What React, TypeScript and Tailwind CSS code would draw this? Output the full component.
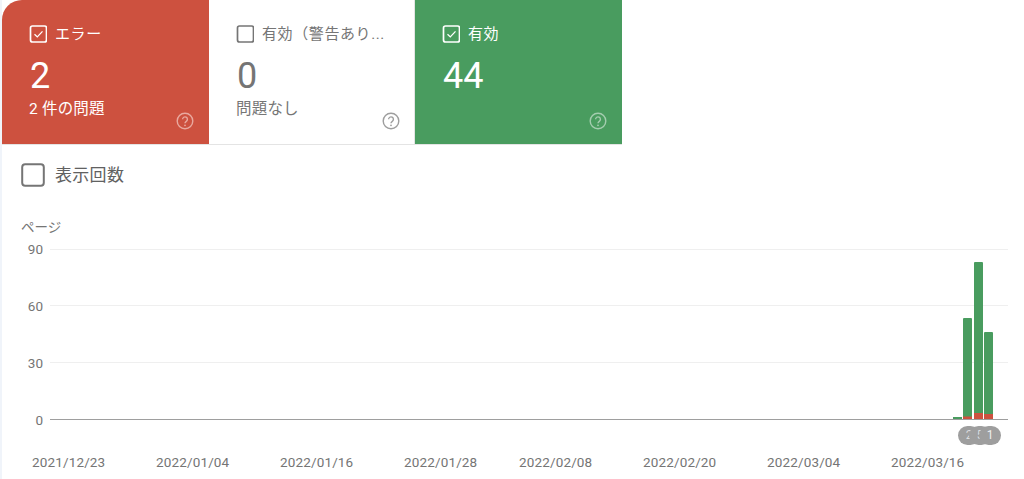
const FONT = "font-['Roboto','Noto_Sans_CJK_JP','Noto_Sans',sans-serif]";

function Check({ on, color }: { on: boolean; color: string }) {
  return (
    <svg width="18" height="18" viewBox="0 0 18 18" fill="none" className="shrink-0">
      <rect x="1.5" y="1" width="16" height="16" rx="2" stroke={color} strokeWidth="1.7" />
      {on && <path d="M5.5 9.2l2.8 2.7L13.5 6.4" stroke={color} strokeWidth="1.3" />}
    </svg>
  );
}

function Help({ color, right }: { color: string; right: string }) {
  return (
    <svg width="18" height="18" viewBox="0 0 18 18" fill="none" className={`absolute bottom-[14px] ${right}`}>
      <circle cx="9" cy="9" r="7.8" stroke={color} strokeWidth="1.4" />
      <path d="M6.6 7.3a2.4 2.4 0 1 1 3.7 2c-.9.6-1.3 1-1.3 1.9" stroke={color} strokeWidth="1.4" />
      <circle cx="9" cy="13.3" r="0.9" fill={color} />
    </svg>
  );
}

function Card({ title, value, sub, on, bg, fg, help, corner, right }: { title: string; value: string; sub?: string; on: boolean; bg: string; fg: string; help: string; corner?: string; right: string }) {
  return (
    <div className={`relative h-[144px] pl-[27px] pr-[26px] pt-[25px] ${bg} ${fg} ${corner ?? ""}`}>
      <div className="flex items-center gap-[8px] h-[18px]">
        <Check on={on} color={on ? "#ffffff" : "#757575"} />
        <span className="text-[15px] leading-[18px] tracking-[0.6px] whitespace-nowrap">{title}</span>
      </div>
      <div className="text-[36px] leading-[42px] mt-[12px] ml-[1px]">{value}</div>
      {sub && <div className="text-[15.5px] leading-[20px] mt-[2px] tracking-[0.2px]">{sub}</div>}
      <Help color={help} right={right} />
    </div>
  );
}

const dates = ["2021/12/23", "2022/01/04", "2022/01/16", "2022/01/28", "2022/02/08", "2022/02/20", "2022/03/04", "2022/03/16"];
const dateWidths = [124, 124, 124, 115, 124, 124, 124, 100];

function Chart() {
  return (
    <svg width="958" height="175" viewBox="0 0 958 175" className="block">
      <path d="M0 0.5H958M0 56.5H958M0 113.5H958" stroke="#efefef" />
      <path d="M0 170.5H958" stroke="#9e9e9e" />
      <rect x="903" y="168" width="9" height="2" fill="#499c5f" />
      <rect x="913" y="69" width="9" height="101" rx="1" fill="#499c5f" />
      <rect x="913" y="167.5" width="9" height="2.5" fill="#cd513f" />
      <rect x="924" y="13" width="9" height="157" rx="1" fill="#499c5f" />
      <rect x="924" y="164" width="9" height="6" fill="#cd513f" />
      <rect x="934" y="83" width="9" height="87" rx="1" fill="#499c5f" />
      <rect x="934" y="165" width="9" height="5" fill="#cd513f" />
    </svg>
  );
}

export default function App() {
  return (
    <div className={`${FONT} w-[1024px] h-[479px] overflow-hidden bg-white border-l-[2px] border-[#f0f4fa]`}>
      <div className="flex w-[620px] border-b border-[#e4e4e4]">
        <div className="w-[207px] shrink-0">
          <Card title="エラー" value="2" sub="2 件の問題" on bg="bg-[#cd513f]" fg="text-white" help="#e9a99f" corner="rounded-tl-[20px]" right="right-[15px]" />
        </div>
        <div className="w-[206px] shrink-0 border-r border-[#e4e4e4]">
          <Card title="有効（警告あり..." value="0" sub="問題なし" on={false} bg="bg-white" fg="text-[#757575]" help="#9e9e9e" right="right-[14px]" />
        </div>
        <div className="w-[207px] shrink-0">
          <Card title="有効" value="44" on bg="bg-[#499c5f]" fg="text-white" help="#a4cdaf" right="right-[15px]" />
        </div>
      </div>

      <div className="flex items-center gap-[10px] pl-[19px] pt-[17px] h-[43px]">
        <svg width="24" height="24" viewBox="0 0 24 24" fill="none" className="shrink-0">
          <rect x="1.2" y="1.2" width="21.6" height="21.6" rx="3" stroke="#757575" strokeWidth="2" />
        </svg>
        <span className="text-[17px] leading-[24px] text-[#616161] tracking-[0.3px]">表示回数</span>
      </div>

      <div className="pl-[19px] mt-[31px] text-[13.5px] leading-[16px] text-[#757575]">ページ</div>

      <div className="flex mt-[14px] text-[#757575] text-[13.5px]">
        <div className="w-[37px] ml-[4px] flex flex-col items-end leading-[14px] h-[180px] -mt-[7px] shrink-0 gap-[43px]">
          <span>90</span>
          <span>60</span>
          <span>30</span>
          <span>0</span>
        </div>
        <div className="ml-[7px] relative">
          <Chart />
          <div className="absolute left-[908px] top-[177px] flex">
            <span className="w-[22px] h-[19px] rounded-full bg-[#9e9e9e] text-[#dddddd] text-[12px] leading-[19px] text-center">2</span>
            <span className="w-[22px] h-[19px] rounded-full bg-[#9e9e9e] text-[#dddddd] text-[12px] leading-[19px] text-center -ml-[11px]">5</span>
            <span className="w-[22px] h-[19px] rounded-full bg-[#9e9e9e] text-[#eeeeee] text-[12px] leading-[19px] text-center -ml-[12px]">1</span>
          </div>
        </div>
      </div>

      <div className="flex pl-[30px] mt-[30px] text-[13.5px] leading-[16px] text-[#757575] tracking-[0.15px]">
        {dates.map((d, i) => (
          <span key={d} style={{ width: dateWidths[i] }} className="shrink-0">{d}</span>
        ))}
      </div>
    </div>
  );
}
